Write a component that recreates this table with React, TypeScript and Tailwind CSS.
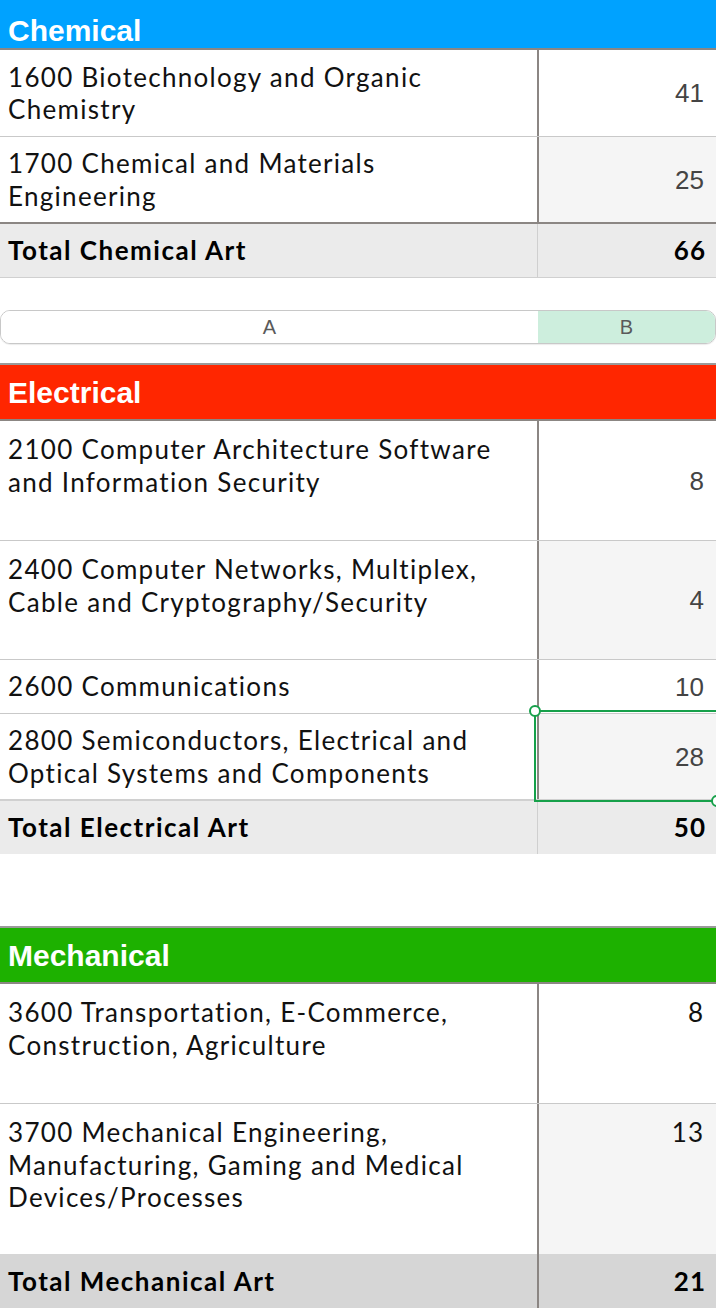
import React from 'react';

const BODY = '"Lato", "Open Sans", sans-serif';
const HEAD = '"Liberation Sans", Arial, sans-serif';

type Row = {
  lines: string[];
  value: string;
  height: string;
  textTop?: boolean;
  valueTop?: boolean;
  shaded?: boolean;
  plainNum?: boolean;
  selected?: boolean;
};

type Section = {
  title: string;
  color: string;
  rows: Row[];
  total: string;
  totalValue: string;
  totalStyle: 'thick' | 'light' | 'dark';
};

const sections: Section[] = [
  {
    title: 'Chemical',
    color: 'bg-[#00a2ff]',
    rows: [
      { lines: ['1600 Biotechnology and Organic', 'Chemistry'], value: '41', height: 'h-[86px]', plainNum: true },
      { lines: ['1700 Chemical and Materials', 'Engineering'], value: '25', height: 'h-[86px]', shaded: true, plainNum: true },
    ],
    total: 'Total Chemical Art',
    totalValue: '66',
    totalStyle: 'thick',
  },
  {
    title: 'Electrical',
    color: 'bg-[#ff2600]',
    rows: [
      { lines: ['2100 Computer Architecture Software', 'and Information Security'], value: '8', height: 'h-[119px]', textTop: true, plainNum: true },
      { lines: ['2400 Computer Networks, Multiplex,', 'Cable and Cryptography/Security'], value: '4', height: 'h-[119px]', textTop: true, shaded: true, plainNum: true },
      { lines: ['2600 Communications'], value: '10', height: 'h-[54px]', plainNum: true },
      { lines: ['2800 Semiconductors, Electrical and', 'Optical Systems and Components'], value: '28', height: 'h-[86px]', shaded: true, plainNum: true, selected: true },
    ],
    total: 'Total Electrical Art',
    totalValue: '50',
    totalStyle: 'light',
  },
  {
    title: 'Mechanical',
    color: 'bg-[#1db100]',
    rows: [
      { lines: ['3600 Transportation, E-Commerce,', 'Construction, Agriculture'], value: '8', height: 'h-[119px]', textTop: true, valueTop: true },
      { lines: ['3700 Mechanical Engineering,', 'Manufacturing, Gaming and Medical', 'Devices/Processes'], value: '13', height: 'h-[151px]', textTop: true, valueTop: true, shaded: true },
    ],
    total: 'Total Mechanical Art',
    totalValue: '21',
    totalStyle: 'dark',
  },
];

function DataRow({ row, first }: { row: Row; first: boolean }) {
  return (
    <div className={`relative flex ${row.height} ${first ? '' : 'border-t border-[#c9c9c9]'}`}>
      <div
        className={`w-[537px] shrink-0 flex flex-col px-2 text-[26px] leading-[32.5px] tracking-[1.3px] text-[#111] ${
          row.textTop ? 'justify-start pt-[12px]' : 'justify-center'
        }`}
      >
        {row.lines.map((l) => (
          <div key={l} className="whitespace-nowrap">
            {l}
          </div>
        ))}
      </div>
      <div className="w-[2px] shrink-0 bg-[#8b8683]" />
      <div
        className={`flex-1 flex pl-[10px] pr-[12px] ${row.shaded ? 'bg-[#f5f5f5]' : 'bg-white'} ${
          row.valueTop ? 'items-start justify-end pt-[12px]' : 'items-center justify-end'
        }`}
      >
        <span
          className={row.plainNum ? 'text-[26px] leading-[32px] text-[#444]' : 'text-[26px] leading-[32px] tracking-[1px] text-[#111]'}
          style={row.plainNum ? { fontFamily: HEAD } : undefined}
        >
          {row.value}
        </span>
      </div>
      {row.selected && (
        <div className="absolute left-[534px] top-[-4px] right-[-2px] bottom-[-3px] border-2 border-[#16a04a] pointer-events-none">
          <div className="absolute left-[-7px] top-[-7px] w-[12px] h-[12px] rounded-full border-2 border-[#16a04a] bg-white" />
          <div className="absolute right-[-7px] bottom-[-7px] w-[12px] h-[12px] rounded-full border-2 border-[#16a04a] bg-white" />
        </div>
      )}
    </div>
  );
}

function Table({ s }: { s: Section }) {
  const totalBorder =
    s.totalStyle === 'thick'
      ? 'border-t-2 border-[#8b8683] bg-[#ebebeb]'
      : s.totalStyle === 'light'
      ? 'border-t-2 border-[#d0d0d0] bg-[#ebebeb]'
      : 'bg-[#d6d6d6]';
  const divider = s.totalStyle === 'dark' ? 'w-[2px] bg-[#8b8683]' : 'w-px bg-[#cfcfcf] mr-px';
  return (
    <div>
      <div
        className={`${s.color} flex items-center px-2 text-white font-bold text-[30px] ${
          s.title === 'Chemical' ? 'h-[50px] pt-[12px]' : 'h-[58px] border-t-2 border-[#9a9a9a]'
        } border-b-2 border-b-[#8b8683]`}
        style={{ fontFamily: HEAD }}
      >
        {s.title}
      </div>
      {s.rows.map((r, i) => (
        <DataRow key={r.lines[0]} row={r} first={i === 0} />
      ))}
      <div className={`flex h-[55px] ${totalBorder}`}>
        <div className="w-[537px] shrink-0 flex items-center px-2 text-[26px] font-bold tracking-[1.5px] text-black">
          {s.total}
        </div>
        <div className={`shrink-0 ${divider}`} />
        <div className="flex-1 flex items-center justify-end pl-[10px] pr-[10px] text-[26px] font-bold tracking-[1px] text-black">
          {s.totalValue}
        </div>
      </div>
    </div>
  );
}

export default function App() {
  return (
    <div className="w-[716px] h-[1308px] overflow-hidden bg-white" style={{ fontFamily: BODY }}>
      <Table s={sections[0]} />
      <div className="h-[33px] border-t border-[#d0d0d0]" />
      <div
        className="flex h-[34px] rounded-[10px] border border-[#c8c8c8] overflow-hidden shadow-[0_1px_1px_rgba(0,0,0,0.08)] text-[20px] text-[#5a5a5a]"
        style={{ fontFamily: HEAD }}
      >
        <div className="w-[537px] shrink-0 flex items-center justify-center bg-white">A</div>
        <div className="flex-1 flex items-center justify-center bg-[#cdeedd]">B</div>
      </div>
      <div className="h-[19px]" />
      <Table s={sections[1]} />
      <div className="h-[72px]" />
      <Table s={sections[2]} />
    </div>
  );
}
